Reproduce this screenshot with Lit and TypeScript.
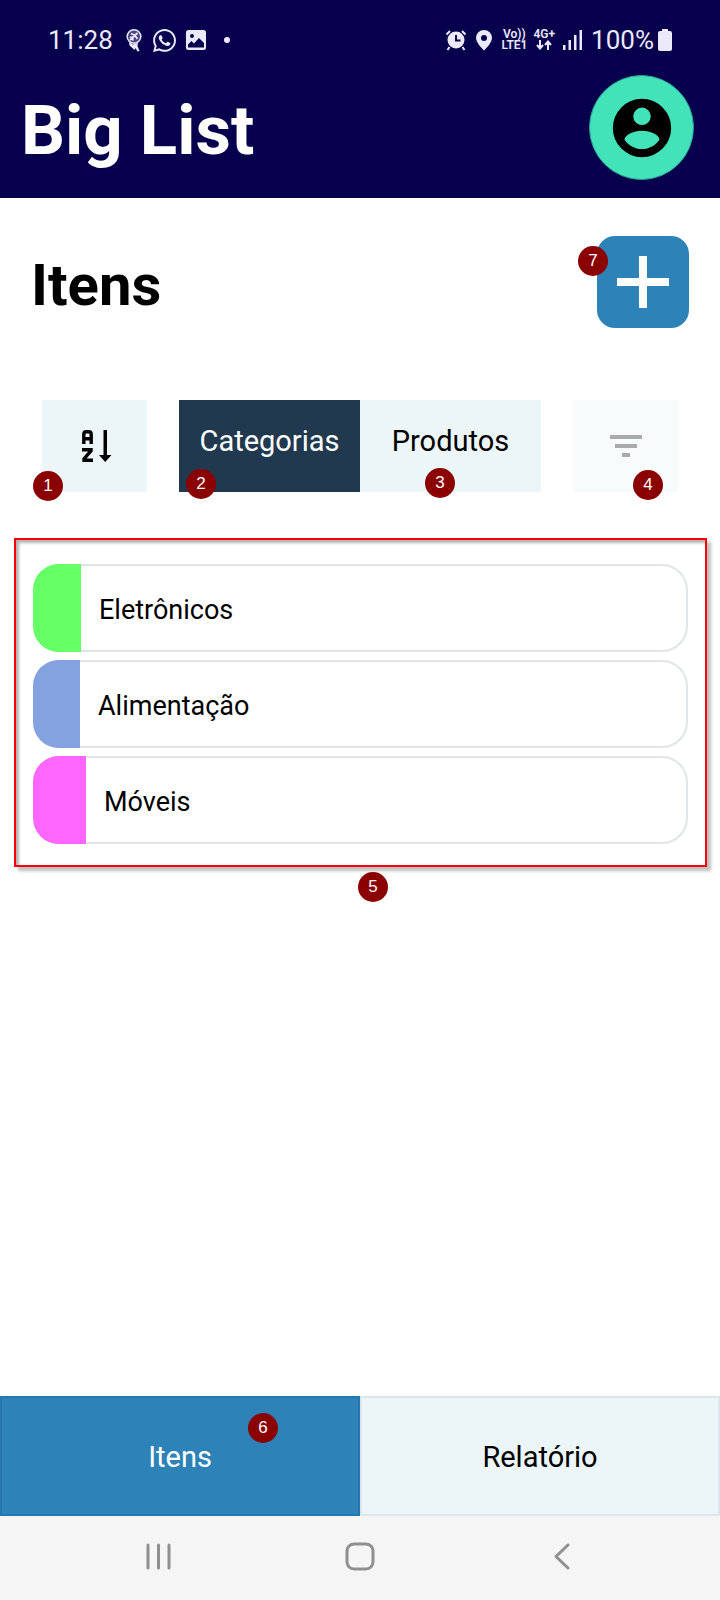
import { LitElement, html, css, svg } from "lit";
import { customElement, property, state } from "lit/decorators.js";
import { classMap } from "lit/directives/class-map.js";

interface Category {
  name: string;
  color: string;
  swatch: number;
}

const CATEGORIES: Category[] = [
  { name: "Eletrônicos", color: "#66ff66", swatch: 48 },
  { name: "Alimentação", color: "#84a1e0", swatch: 47 },
  { name: "Móveis", color: "#ff66ff", swatch: 53 },
];

@customElement("step-badge")
export class StepBadge extends LitElement {
  static styles = css`
    :host {
      position: absolute;
      z-index: 1;
      display: grid;
      place-items: center;
      width: 30px;
      height: 30px;
      border-radius: 50%;
      background: #8b0000;
      color: #fff;
      font: 17px/30px "Liberation Sans", Arial, sans-serif;
      pointer-events: none;
    }
  `;
  @property({ type: Number }) n = 0;
  render() {
    return html`${this.n}`;
  }
}

@customElement("status-bar")
export class StatusBar extends LitElement {
  static styles = css`
    :host {
      display: flex;
      justify-content: space-between;
      align-items: center;
      padding: 24px 48px 0;
      color: #ebe9f8;
      font-size: 26px;
      line-height: 32px;
    }
    .group {
      display: flex;
      align-items: center;
    }
    .left {
      gap: 10px;
    }
    .right {
      gap: 8px;
    }
    .battery {
      display: flex;
      align-items: center;
      gap: 4px;
    }
    .network {
      display: flex;
      gap: 6px;
    }
    .stack {
      display: flex;
      flex-direction: column;
      align-items: center;
      font-size: 12px;
      font-weight: 600;
      line-height: 11px;
    }
    svg {
      display: block;
      fill: currentColor;
    }
    .dot {
      width: 6px;
      height: 6px;
      margin-left: 8px;
      border-radius: 50%;
      background: currentColor;
    }
  `;
  render() {
    return html`
      <div class="group left">
        <span>11:28</span>
        <svg width="20" height="24" viewBox="0 0 20 24">
          <circle cx="11" cy="8.500" r="6.800" fill="#4b4480" stroke="currentColor" stroke-width="1.500"/>
          <path d="M6 14l4 2.500 5-1.500-.500 3 2 5-2 .500-2-3.500-1 2-5-4.500z"/>
          <path d="M7 12l7.500-7M8 5.500l4 2 2.500 3.500M7 9l2.500 1 .500 2.500" fill="none" stroke="currentColor" stroke-width="1.800"/>
        </svg>
        <svg width="23" height="23" viewBox="2 2 20 20">
          <path d="M12.040 2C6.580 2 2.130 6.450 2.130 11.910c0 1.750.460 3.450 1.320 4.950L2.050 22l5.250-1.380c1.450.790 3.080 1.210 4.740 1.210 5.460 0 9.910-4.450 9.910-9.910S17.500 2 12.040 2m0 1.670c4.540 0 8.240 3.700 8.240 8.240s-3.700 8.240-8.240 8.240c-1.480 0-2.930-.400-4.190-1.150l-.300-.170-3.120.820.830-3.040-.200-.320a8.190 8.190 0 0 1-1.260-4.380c0-4.540 3.700-8.240 8.240-8.240M8.530 7.330c-.160 0-.430.060-.660.310-.220.250-.870.860-.870 2.070 0 1.220.890 2.390 1 2.560.140.170 1.760 2.670 4.250 3.730.590.270 1.050.420 1.410.530.590.190 1.130.160 1.560.100.480-.070 1.460-.600 1.670-1.180s.210-1.070.150-1.180c-.070-.100-.230-.160-.480-.270-.250-.140-1.470-.740-1.690-.820-.230-.080-.370-.120-.560.120-.160.250-.640.810-.780.970-.150.170-.290.190-.530.070-.260-.130-1.060-.390-2-1.230-.740-.660-1.230-1.470-1.380-1.720-.120-.240-.010-.390.110-.500.110-.110.270-.290.370-.440.130-.140.170-.250.250-.410.080-.170.040-.310-.020-.430-.060-.110-.560-1.350-.770-1.840-.200-.480-.400-.420-.560-.430-.140 0-.300-.010-.470-.010z"/>
        </svg>
        <svg width="20" height="20" viewBox="0 0 20 20">
          <path fill-rule="evenodd" d="M2.500 0h15A2.500 2.500 0 0 1 20 2.500v15a2.500 2.500 0 0 1-2.500 2.500h-15A2.500 2.500 0 0 1 0 17.500v-15A2.500 2.500 0 0 1 2.500 0zM6 4a2 2 0 1 0 0 4 2 2 0 0 0 0-4zM2 17.500h16V13l-5-5-5 5.500-2.500-2.500L2 14.500z"/>
        </svg>
        <span class="dot"></span>
      </div>
      <div class="group right">
        <svg width="22" height="22" viewBox="0 0 22 22">
          <path fill-rule="evenodd" d="M11 2.500a8.500 8.500 0 1 0 0 17 8.500 8.500 0 0 0 0-17zM10 6h2v4.500h3.500v2H10z"/>
          <path d="M1.500 5.500L5 2M20.500 5.500L17 2M4.500 18l-2 3M17.500 18l2 3" stroke="currentColor" stroke-width="2"/>
        </svg>
        <svg width="18" height="22" viewBox="2 0 18 22">
          <path fill-rule="evenodd" d="M11 1a8 8 0 0 0-8 8c0 5 8 12.500 8 12.500S19 14 19 9a8 8 0 0 0-8-8zm0 5a3 3 0 1 1 0 6 3 3 0 0 1 0-6z"/>
        </svg>
        <span class="network">
          <span class="stack"><span>Vo))</span><span>LTE1</span></span>
          <span class="stack"><span>4G+</span>
            <svg width="16" height="10" viewBox="0 0 16 10"><path d="M4 0v8M1 5l3 3.500L7 5M12 10V1.500M9 5l3-3.500L15 5" fill="none" stroke="currentColor" stroke-width="2"/></svg>
          </span>
        </span>
        <svg width="20" height="20" viewBox="0 0 20 20">
          <path d="M0 15h2.500v5H0zM5.500 10H8v10H5.500zM11 5h2.500v15H11zM16.500 0H19v20h-2.500z"/>
        </svg>
        <span class="battery"><span>100%</span>
          <svg width="14" height="22" viewBox="0 0 14 22"><path d="M4 0h6v2h2a2 2 0 0 1 2 2v16a2 2 0 0 1-2 2H2a2 2 0 0 1-2-2V4a2 2 0 0 1 2-2h2z"/></svg>
        </span>
      </div>
    `;
  }
}

@customElement("app-root")
export class AppRoot extends LitElement {
  static styles = css`
    :host {
      display: flex;
      flex-direction: column;
      min-height: 100vh;
      background: #fff;
      color: #000;
      font-family: Roboto, sans-serif;
    }
    * {
      box-sizing: border-box;
    }
    h1,
    h2,
    ul {
      margin: 0;
      padding: 0;
    }
    button {
      margin: 0;
      padding: 0;
      border: 0;
      font: inherit;
      color: inherit;
      cursor: pointer;
    }
    svg {
      display: block;
    }
    header {
      background: #06004d;
      padding-bottom: 18px;
    }
    .brand {
      display: flex;
      align-items: center;
      justify-content: space-between;
      padding: 19px 26px 0 21px;
    }
    h1 {
      padding-top: 6px;
      color: #fff;
      font-size: 69px;
      line-height: 80px;
    }
    .avatar {
      display: grid;
      place-items: center;
      width: 105px;
      height: 105px;
      border: 1px solid #2a9d94;
      border-radius: 50%;
      background: #43e3ba;
    }
    main {
      flex: 1;
    }
    .heading {
      display: flex;
      align-items: center;
      justify-content: space-between;
      padding: 38px 31px 0 31px;
    }
    h2 {
      padding-top: 6px;
      font-size: 58px;
      line-height: 68px;
    }
    .anchor {
      position: relative;
      display: flex;
    }
    .add {
      display: grid;
      place-items: center;
      width: 92px;
      height: 92px;
      border-radius: 18px;
      background: #2d82b8;
    }
    .toolbar {
      display: flex;
      gap: 32px;
      padding: 72px 42px 0;
      font-size: 29px;
    }
    .tool {
      display: grid;
      place-items: center;
      width: 105px;
      height: 92px;
      background: #ecf5f8;
    }
    .tool:disabled {
      opacity: 0.33;
    }
    .tabs {
      flex: 1;
    }
    .tab {
      flex: 1;
      height: 92px;
      padding-bottom: 10px;
      background: #ecf5f8;
    }
    .tab.on {
      background: #20394f;
      color: #fff;
    }
    .panel {
      position: relative;
      margin: 46px 13px 0 14px;
      padding: 24px 17px 21px;
      border: 2px solid #f00;
      box-shadow: 4px 4px 3px rgba(0, 0, 0, 0.25), inset 3px 3px 3px rgba(0, 0, 0, 0.3);
    }
    ul {
      display: flex;
      flex-direction: column;
      gap: 8px;
      list-style: none;
    }
    .item {
      display: flex;
      align-items: center;
      gap: 18px;
      height: 88px;
      overflow: hidden;
      border-radius: 26px;
      box-shadow: inset 0 0 0 2px #e0e6e7;
      font-size: 27px;
      line-height: 32px;
    }
    .swatch {
      height: 88px;
    }
    .name {
      padding-top: 4px;
    }
    .bottom {
      display: flex;
      font-size: 29px;
    }
    .bottom .anchor {
      flex: 1;
    }
    .page {
      flex: 1;
      height: 120px;
      padding-top: 2px;
      border: 2px solid #dbe7eb;
      background: #ecf5f8;
    }
    .page.on {
      border-color: #2577ad;
      background: #2d82b8;
      color: #fff;
    }
    .system {
      display: flex;
      justify-content: center;
      gap: 162px;
      padding: 20px 0 22px;
      background: #f5f5f5;
    }
    .key {
      width: 40px;
      height: 42px;
      background: none;
    }
    .at-sort { left: -9px; top: 71px; }
    .at-cat { left: 7px; top: 69px; }
    .at-prod { right: 86px; top: 68px; }
    .at-filter { right: 15px; top: 70px; }
    .at-list { left: 342px; top: 332px; }
    .at-page { right: 82px; top: 17px; }
    .at-add { left: -19px; top: 10px; }
  `;

  @state() private tab = "Categorias";
  @state() private page = "Itens";

  private key(label: string, shape: unknown) {
    return html`<button class="key" aria-label=${label}>
      <svg width="40" height="42" viewBox="0 0 40 42" fill="none" stroke="#8f8f8f" stroke-width="3" stroke-linecap="round" stroke-linejoin="round">${shape}</svg>
    </button>`;
  }

  private tabButton(name: string) {
    return html`<button class=${classMap({ tab: true, on: this.tab === name })} @click=${() => (this.tab = name)}>${name}</button>`;
  }

  private pageButton(name: string) {
    return html`<button class=${classMap({ page: true, on: this.page === name })} @click=${() => (this.page = name)}>${name}</button>`;
  }

  render() {
    return html`
      <header>
        <status-bar></status-bar>
        <div class="brand">
          <h1>Big List</h1>
          <button class="avatar" aria-label="Perfil">
            <svg width="70" height="70" viewBox="0 0 24 24"><path d="M12 19.200c-2.500 0-4.710-1.280-6-3.200.030-2 4-3.100 6-3.100s6 1.100 6 3.100c-1.290 1.920-3.500 3.200-6 3.200M12 5a3 3 0 1 1 0 6 3 3 0 0 1 0-6m0-3a10 10 0 1 0 0 20 10 10 0 0 0 0-20z"/></svg>
          </button>
        </div>
      </header>
      <main>
        <div class="heading">
          <h2>Itens</h2>
          <div class="anchor">
            <button class="add" aria-label="Adicionar">
              <svg width="54" height="54" viewBox="0 0 54 54"><path d="M23 1h8v22h22v8H31v22h-8V31H1v-8h22z" fill="#fff"/></svg>
            </button>
            <step-badge class="at-add" .n=${7}></step-badge>
          </div>
        </div>
        <div class="toolbar">
          <div class="anchor">
            <button class="tool" aria-label="Ordenar">
              <svg width="34" height="32" viewBox="-4 0 34 32">
                <path d="M1.800 14V4.500Q1.800 1.800 4.300 1.800h2.400Q9.200 1.800 9.200 4.500V14M2 8.800h7M0 19.800h9v1L2 29v1.200h9" fill="none" stroke="#000" stroke-width="3.400"/>
                <path d="M21.500 0h3.500v25h4.500l-6.300 7-6.200-7h4.500z"/>
              </svg>
            </button>
            <step-badge class="at-sort" .n=${1}></step-badge>
          </div>
          <div class="anchor tabs">
            ${this.tabButton("Categorias")}${this.tabButton("Produtos")}
            <step-badge class="at-cat" .n=${2}></step-badge>
            <step-badge class="at-prod" .n=${3}></step-badge>
          </div>
          <div class="anchor">
            <button class="tool" aria-label="Filtrar" disabled>
              <svg width="32" height="22" viewBox="0 0 32 22"><path d="M0 0h32v4H0zM5 9h22v4H5zM12 18h8v4h-8z"/></svg>
            </button>
            <step-badge class="at-filter" .n=${4}></step-badge>
          </div>
        </div>
        <div class="panel">
          <ul>
            ${CATEGORIES.map(
              (c) => html`<li class="item"><span class="swatch" style="width:${c.swatch}px;background:${c.color}"></span><span class="name">${c.name}</span></li>`
            )}
          </ul>
          <step-badge class="at-list" .n=${5}></step-badge>
        </div>
      </main>
      <nav class="bottom">
        <div class="anchor">
          ${this.pageButton("Itens")}
          <step-badge class="at-page" .n=${6}></step-badge>
        </div>
        <div class="anchor">${this.pageButton("Relatório")}</div>
      </nav>
      <div class="system">
        ${this.key("Recentes", svg`<path d="M10 9v23M20.500 9v23M31 9v23"/>`)}
        ${this.key("Início", svg`<rect x="7" y="8" width="26" height="25" rx="7"/>`)}
        ${this.key("Voltar", svg`<path d="M26 9L14 20.500L26 32"/>`)}
      </div>
    `;
  }
}
